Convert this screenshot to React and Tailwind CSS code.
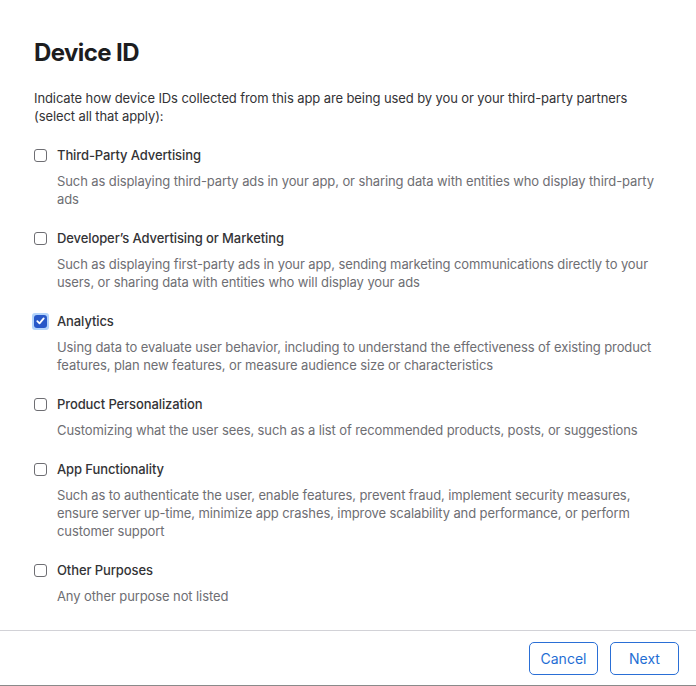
import React, { useState } from "react";

const options = [
  {
    id: "third",
    label: "Third-Party Advertising",
    desc: "Such as displaying third-party ads in your app, or sharing data with entities who display third-party ads",
  },
  {
    id: "dev",
    label: "Developer’s Advertising or Marketing",
    desc: "Such as displaying first-party ads in your app, sending marketing communications directly to your users, or sharing data with entities who will display your ads",
  },
  {
    id: "analytics",
    label: "Analytics",
    desc: "Using data to evaluate user behavior, including to understand the effectiveness of existing product features, plan new features, or measure audience size or characteristics",
  },
  {
    id: "personal",
    label: "Product Personalization",
    desc: "Customizing what the user sees, such as a list of recommended products, posts, or suggestions",
  },
  {
    id: "func",
    label: "App Functionality",
    desc: "Such as to authenticate the user, enable features, prevent fraud, implement security measures, ensure server up-time, minimize app crashes, improve scalability and performance, or perform customer support",
  },
  {
    id: "other",
    label: "Other Purposes",
    desc: "Any other purpose not listed",
  },
];

const Checkbox = ({ checked, onClick }) => {
  if (checked) {
    return (
      <button
        onClick={onClick}
        className="w-[17px] h-[17px] -ml-[2px] mr-[8px] rounded-[3px] bg-[#b3d4fb] flex items-center justify-center shrink-0"
      >
        <span className="w-[13px] h-[13px] rounded-[3px] bg-[#2858c8] flex items-center justify-center">
          <svg width="9" height="8" viewBox="0 0 9 8" fill="none">
            <path
              d="M1.3 4.2 L3.5 6.4 L7.7 1.4"
              stroke="white"
              strokeWidth="1.8"
              strokeLinecap="round"
              strokeLinejoin="round"
            />
          </svg>
        </span>
      </button>
    );
  }
  return (
    <button
      onClick={onClick}
      className="w-[13px] h-[13px] mr-[10px] rounded-[3px] border border-[#6e6e73] bg-white shrink-0"
    />
  );
};

const App = () => {
  const [selected, setSelected] = useState({ analytics: true });

  const toggle = (id) => {
    setSelected({ ...selected, [id]: !selected[id] });
  };

  return (
    <div className="w-[696px] h-[686px] bg-white flex flex-col font-['Inter','Helvetica_Neue',sans-serif] text-[#1d1d1f] border-b border-[#8a8a8a]">
      <div className="flex-1 px-[34px] pt-[38px]">
        <h1 className="text-[24px] leading-[30px] font-bold tracking-[-0.6px]">
          Device ID
        </h1>
        <p className="mt-[21px] text-[13px] leading-[18px] tracking-[-0.1px] text-[#333336]">
          Indicate how device IDs collected from this app are being used by you
          or your third-party partners (select all that apply):
        </p>
        <div className="mt-[21px] flex flex-col gap-[21px]">
          {options.map((o) => (
            <div key={o.id}>
              <div className="flex items-center h-[18px]">
                <Checkbox
                  checked={!!selected[o.id]}
                  onClick={() => toggle(o.id)}
                />
                <span className="text-[13px] leading-[18px] tracking-[-0.1px] font-medium text-[#333336]">
                  {o.label}
                </span>
              </div>
              <p className="mt-[8px] pl-[23px] text-[13px] leading-[18px] tracking-[-0.1px] text-[#6e6e73]">
                {o.desc}
              </p>
            </div>
          ))}
        </div>
      </div>
      <div className="border-t border-[#d2d2d7] flex justify-end gap-[12px] px-[17px] pt-[11px] pb-[10px]">
        <button className="w-[69px] h-[33px] rounded-[5px] border border-[#2a6fd6] text-[#1f6ed4] text-[14px]">
          Cancel
        </button>
        <button className="w-[69px] h-[33px] rounded-[5px] border border-[#2a6fd6] text-[#1f6ed4] text-[14px]">
          Next
        </button>
      </div>
    </div>
  );
};

export default App;
